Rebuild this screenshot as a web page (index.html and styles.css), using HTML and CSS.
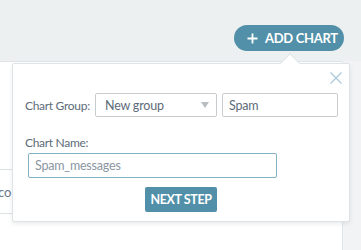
FILE: index.html
```html
<!DOCTYPE html>
<html>
<head>
<meta charset="utf-8">
<link rel="stylesheet" href="styles.css">
</head>
<body>
<div class="page">
  <header class="topbar">
    <button class="add-btn">
      <svg class="plus" width="11" height="11" viewBox="0 0 11 11"><path d="M5.5 0.5v10M0.5 5.5h10" stroke="#fff" stroke-width="1.8"/></svg>
      <span>ADD CHART</span>
    </button>
  </header>
  <main class="content">
    <div class="table">
      <div class="row cell">co</div>
    </div>
  </main>
  <aside class="side"></aside>
</div>
<div class="popover">
  <span class="arrow"></span>
  <svg class="close" width="12" height="12" viewBox="0 0 12 12"><path d="M0.5 0.5l11 11M11.5 0.5l-11 11" stroke="#a9c8d8" stroke-width="1.2"/></svg>
  <div class="group-row">
    <label class="lbl">Chart Group:</label>
    <div class="select"><span>New group</span><span class="caret"></span></div>
    <div class="input spam">Spam</div>
  </div>
  <label class="lbl name-lbl">Chart Name:</label>
  <div class="input name">Spam_messages</div>
  <div class="actions"><button class="next">NEXT STEP</button></div>
</div>
</body>
</html>
```
FILE: styles.css
```css
* { box-sizing: border-box; }
html, body { margin: 0; padding: 0; }
body {
  width: 361px; height: 250px; overflow: hidden;
  background: #edf0f1;
  font-family: Lato, "Open Sans", sans-serif;
  font-size: 12.5px;
  color: #5a6a78;
  position: relative;
}
.page {
  display: grid;
  grid-template-columns: 343px 18px;
  grid-template-rows: 61px 189px;
}
.topbar {
  grid-column: 1 / 3;
  display: flex;
  justify-content: flex-end;
  align-items: flex-start;
  padding: 25px 17px 0 0;
}
.add-btn {
  display: flex; align-items: center; gap: 7px;
  height: 26px; width: 110px;
  padding: 0 0 0 13px;
  border: none; border-radius: 13px;
  background: #5190a8;
  color: #fff;
  font-family: inherit; font-size: 13px; font-weight: 700;
  letter-spacing: -0.3px;
}
.content {
  background: #fff;
  border-top: 1px solid #dfe4e6;
  border-right: 1px solid #e1e6e8;
}
.side { background: #f1f3f4; }
.table { padding-top: 107px; }
.row {
  border-top: 1px solid #dde2e4;
  border-bottom: 1px solid #dde2e4;
  height: 45px;
}
.cell {
  display: flex; align-items: center;
  margin-left: -2px;
  color: #6a7888;
  font-size: 13px;
}
.popover {
  position: absolute;
  left: 12px; top: 63px;
  width: 338px; height: 159px;
  background: #fff;
  border: 1px solid #dde3e6;
  border-radius: 2px;
  box-shadow: 0 2px 4px rgba(0,0,0,0.08);
  padding: 29px 12px 0 12px;
  display: flex; flex-direction: column;
}
.arrow {
  position: absolute;
  left: 270px; top: -8px;
  width: 14px; height: 14px;
  background: #fff;
  border-left: 1px solid #dde3e6;
  border-top: 1px solid #dde3e6;
  transform: rotate(45deg);
}
.close { position: absolute; right: 7px; top: 8px; }
.group-row { display: flex; align-items: center; }
.lbl { color: #5c6b79; letter-spacing: -0.3px; font-size: 12px; }
.group-row .lbl { width: 70px; flex: none; white-space: nowrap; }
.select, .input {
  height: 24px;
  border: 1px solid #c9cccf;
  border-radius: 2px;
  display: flex; align-items: center;
  color: #5c6b79;
  letter-spacing: -0.2px;
}
.select { width: 122px; padding: 0 7px 0 9px; justify-content: space-between; flex: none; }
.caret {
  width: 0; height: 0;
  border-left: 4px solid transparent;
  border-right: 4px solid transparent;
  border-top: 6px solid #b9bdc1;
}
.spam { width: 116px; margin-left: 5px; padding-left: 6px; flex: none; }
.name-lbl { margin-top: 18px; }
.name {
  margin: 3px 0 0 3px;
  width: 249px; height: 25px;
  border-color: #82b2c3;
  color: #8a96a2;
  padding-left: 6px;
}
.actions { display: flex; justify-content: center; margin-top: 9px; }
.next {
  width: 72px; height: 25px;
  border: none; border-radius: 2px;
  background: #5190a8;
  color: #fff;
  font-family: inherit; font-size: 12.5px; font-weight: 700;
  letter-spacing: -0.4px;
  padding: 0;
}
```
